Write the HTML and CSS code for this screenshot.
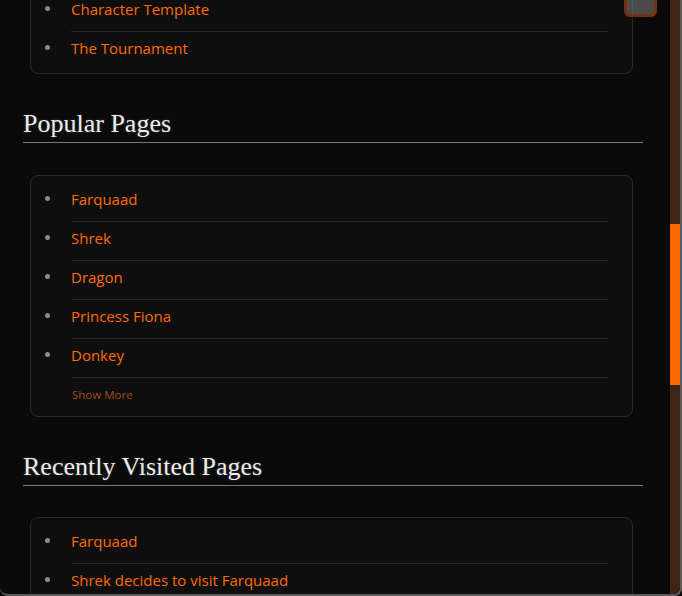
FILE: index.html
```html
<!DOCTYPE html>
<html lang="en">
<head>
<meta charset="utf-8">
<title>Pages</title>
<link rel="stylesheet" href="styles.css">
</head>
<body>
<div class="frame">
  <div class="viewport">
    <div class="content">
      <section class="card card-first">
        <ul class="list">
          <li class="item"><a class="link" href="#">Character Template</a></li>
          <li class="item"><a class="link link-last" href="#">The Tournament</a></li>
        </ul>
      </section>

      <h2 class="heading">Popular Pages</h2>
      <section class="card">
        <ul class="list">
          <li class="item"><a class="link" href="#">Farquaad</a></li>
          <li class="item"><a class="link" href="#">Shrek</a></li>
          <li class="item"><a class="link" href="#">Dragon</a></li>
          <li class="item"><a class="link" href="#">Princess Fiona</a></li>
          <li class="item"><a class="link" href="#">Donkey</a></li>
        </ul>
        <a class="show-more" href="#">Show More</a>
      </section>

      <h2 class="heading heading-recent">Recently Visited Pages</h2>
      <section class="card">
        <ul class="list">
          <li class="item"><a class="link" href="#">Farquaad</a></li>
          <li class="item"><a class="link" href="#">Shrek decides to visit Farquaad</a></li>
        </ul>
      </section>
    </div>
    <button class="float-btn" aria-label="Toggle"></button>
  </div>
  <div class="scrollbar"><div class="thumb"></div></div>
</div>
</body>
</html>
```

FILE: styles.css
```css
html, body {
  margin: 0;
  padding: 0;
  background: #0a0a0a;
}

body {
  font-family: "Open Sans", "Noto Sans", sans-serif;
}

.frame {
  display: flex;
  height: 596px;
  box-sizing: border-box;
  border-right: 2px solid #5c5c5c;
  border-bottom: 2px solid #5c5c5c;
  border-radius: 0 0 8px 8px;
  overflow: hidden;
  background: #0a0a0a;
}

.viewport {
  flex: 1;
  position: relative;
  overflow: hidden;
}

.content {
  padding: 0 27px 0 23px;
}

.card {
  margin: 0 10px 0 7px;
  padding: 7px 24px 3px 14px;
  background: #0e0e0e;
  border: 1px solid #3a2415;
  border-radius: 8px;
}

.card-first {
  margin-top: -15px;
}

.list {
  list-style: none;
  margin: 0;
  padding: 0;
}

.item {
  display: flex;
  align-items: flex-start;
}

.item::before {
  content: "";
  flex: none;
  width: 5px;
  height: 5px;
  border-radius: 50%;
  background: #8a8a8a;
  margin: 13px 21px 0 0;
}

.link {
  flex: 1;
  display: block;
  padding: 6px 0 12px;
  font-size: 15px;
  line-height: 20px;
  color: #ff6a00;
  text-decoration: none;
  border-bottom: 1px solid #262626;
}

.link-last {
  border-bottom: none;
}

.show-more {
  display: block;
  margin-left: 27px;
  padding: 9px 0 10px;
  font-size: 11.5px;
  line-height: 16px;
  color: #a34a10;
  text-decoration: none;
}

.heading {
  margin: 34px 0 32px;
  padding: 0 0 2px;
  font-family: "Liberation Serif", "DejaVu Serif", serif;
  font-weight: normal;
  font-size: 26px;
  line-height: 32px;
  color: #ececec;
  text-shadow: 0 0 3px rgba(255, 255, 255, 0.2);
  border-bottom: 1px solid #7a7a7a;
}

.heading-recent {
  margin-bottom: 31px;
}

.float-btn {
  position: absolute;
  top: -14px;
  right: 13px;
  width: 33px;
  height: 31px;
  padding: 0;
  box-sizing: border-box;
  border: 3px solid rgba(120, 48, 12, 0.9);
  border-radius: 6px;
  background: rgba(110, 110, 110, 0.65);
}

.scrollbar {
  flex: none;
  width: 10px;
  background: #3f2516;
}

.thumb {
  margin-top: 224px;
  height: 161px;
  background: #ff6a00;
}
```
